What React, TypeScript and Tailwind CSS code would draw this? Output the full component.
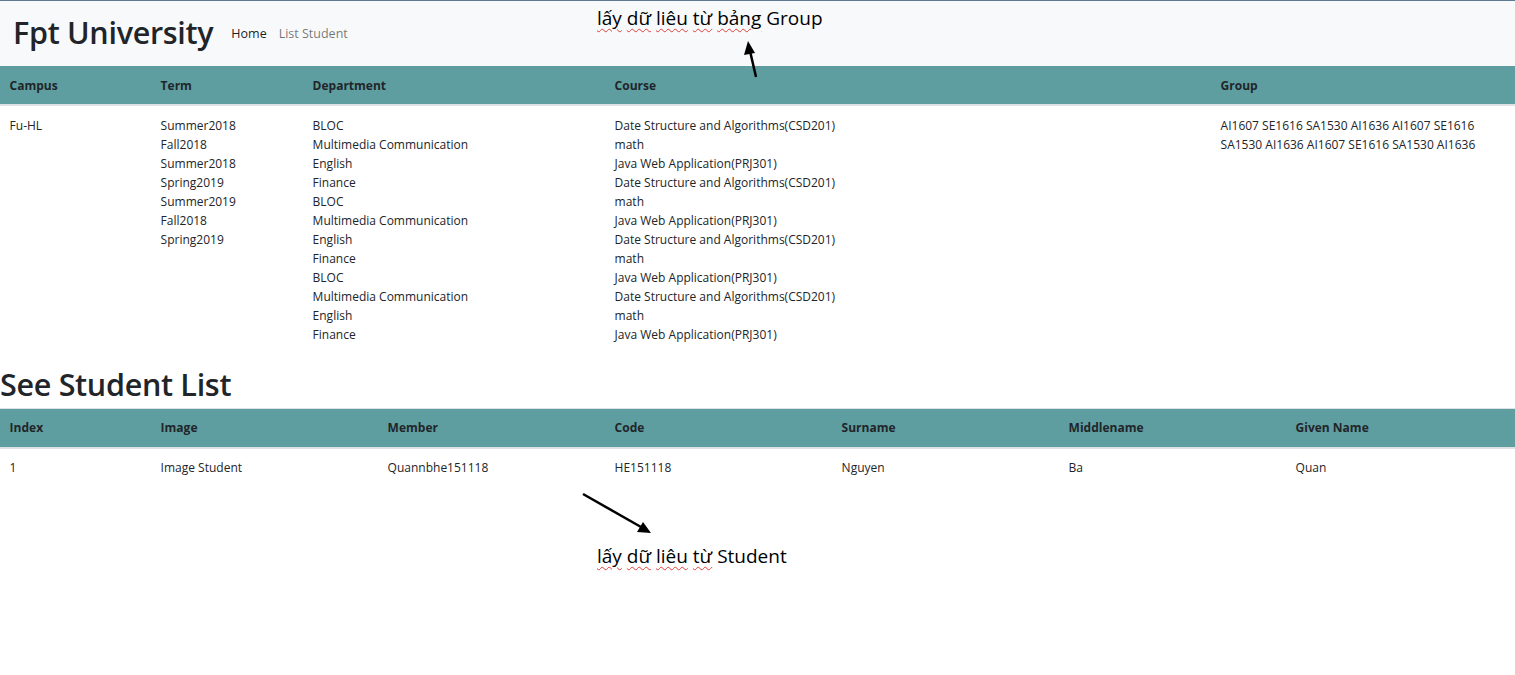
import React from 'react';

const terms = ['Summer2018', 'Fall2018', 'Summer2018', 'Spring2019', 'Summer2019', 'Fall2018', 'Spring2019'];
const departments = [
  'BLOC', 'Multimedia Communication', 'English', 'Finance',
  'BLOC', 'Multimedia Communication', 'English', 'Finance',
  'BLOC', 'Multimedia Communication', 'English', 'Finance',
];
const courses = [
  'Date Structure and Algorithms(CSD201)', 'math', 'Java Web Application(PRJ301)',
  'Date Structure and Algorithms(CSD201)', 'math', 'Java Web Application(PRJ301)',
  'Date Structure and Algorithms(CSD201)', 'math', 'Java Web Application(PRJ301)',
  'Date Structure and Algorithms(CSD201)', 'math', 'Java Web Application(PRJ301)',
];
const groups = 'AI1607 SE1616 SA1530 AI1636 AI1607 SE1616 SA1530 AI1636 AI1607 SE1616 SA1530 AI1636';

const students = [
  { index: 1, image: 'Image Student', member: 'Quannbhe151118', code: 'HE151118', surname: 'Nguyen', middle: 'Ba', given: 'Quan' },
];

const th = 'px-[9.6px] py-[9.5px] text-left font-bold leading-[19px]';
const td = 'px-[9.6px] pt-[9.5px] pb-[10px] align-top leading-[19px]';

// red spell-check squiggle under a word
const Sq = ({ children }: { children: React.ReactNode }) => (
  <span className="underline decoration-wavy decoration-[#e0403a] decoration-1 underline-offset-[3px]">{children}</span>
);

const Note = ({ words, tail, className }: { words: string[]; tail: string; className: string }) => (
  <div className={`absolute text-[19px] leading-none text-black whitespace-nowrap font-['Open_Sans',sans-serif] ${className}`}>
    {words.map((w) => (
      <React.Fragment key={w}>
        <Sq>{w}</Sq>{' '}
      </React.Fragment>
    ))}
    {tail}
  </div>
);

export default function App() {
  return (
    <div className="relative min-h-[675px] bg-white text-[#212529] text-[12px] font-['Open_Sans',sans-serif] border-t border-[#5d7a92]">
      <nav className="flex items-center h-[65px] bg-[#f8f9fa] px-[13px]">
        <h1 className="text-[30.5px] font-semibold leading-none text-[#212529] tracking-[-0.3px] -mt-[2px]">Fpt University</h1>
        <div className="flex items-center gap-[12px] ml-[18px] mt-[1px] text-[12.5px]">
          <a className="text-black/90">Home</a>
          <a className="text-black/55">List Student</a>
        </div>
      </nav>

      <table className="w-full table-fixed border-collapse">
        <colgroup>
          <col className="w-[151px]" />
          <col className="w-[152px]" />
          <col className="w-[302px]" />
          <col className="w-[606px]" />
          <col />
        </colgroup>
        <thead>
          <tr className="bg-[#5f9ea0] border-b-2 border-[#dee2e6]">
            <th className={th}>Campus</th>
            <th className={th}>Term</th>
            <th className={th}>Department</th>
            <th className={th}>Course</th>
            <th className={th}>Group</th>
          </tr>
        </thead>
        <tbody>
          <tr>
            <td className={td}>Fu-HL</td>
            <td className={td}>{terms.map((t, i) => <div key={i}>{t}</div>)}</td>
            <td className={td}>{departments.map((d, i) => <div key={i}>{d}</div>)}</td>
            <td className={td}>{courses.map((c, i) => <div key={i}>{c}</div>)}</td>
            <td className={td}>{groups}</td>
          </tr>
        </tbody>
      </table>

      <h1 className="mt-[12px] mb-[6px] text-[30.5px] font-semibold leading-[36px] tracking-[-0.3px] text-[#212529]">See Student List</h1>

      <table className="w-full table-fixed border-collapse border-t border-[#dee2e6]">
        <colgroup>
          <col className="w-[151px]" />
          <col className="w-[227px]" />
          <col className="w-[227px]" />
          <col className="w-[227px]" />
          <col className="w-[227px]" />
          <col className="w-[227px]" />
          <col />
        </colgroup>
        <thead>
          <tr className="bg-[#5f9ea0] border-b-2 border-[#dee2e6]">
            <th className={th}>Index</th>
            <th className={th}>Image</th>
            <th className={th}>Member</th>
            <th className={th}>Code</th>
            <th className={th}>Surname</th>
            <th className={th}>Middlename</th>
            <th className={th}>Given Name</th>
          </tr>
        </thead>
        <tbody>
          {students.map((s) => (
            <tr key={s.index}>
              <td className={td}>{s.index}</td>
              <td className={td}>{s.image}</td>
              <td className={td}>{s.member}</td>
              <td className={td}>{s.code}</td>
              <td className={td}>{s.surname}</td>
              <td className={td}>{s.middle}</td>
              <td className={td}>{s.given}</td>
            </tr>
          ))}
        </tbody>
      </table>

      {/* annotations laid over the page */}
      <Note words={['lấy', 'dữ', 'liêu', 'từ', 'bảng']} tail="Group" className="left-[597px] top-[8px]" />
      <Note words={['lấy', 'dữ', 'liêu', 'từ']} tail="Student" className="left-[597px] top-[546px]" />

      <svg className="absolute left-0 top-0 pointer-events-none" width="1515" height="675">
        <line x1="756" y1="76" x2="750" y2="50" stroke="#000" strokeWidth="2.5" />
        <polygon points="748,40 744,54 755,52" fill="#000" />
        <line x1="583" y1="493" x2="641" y2="526" stroke="#000" strokeWidth="2.5" />
        <polygon points="651,532 637,531 643,521" fill="#000" />
      </svg>
    </div>
  );
}
